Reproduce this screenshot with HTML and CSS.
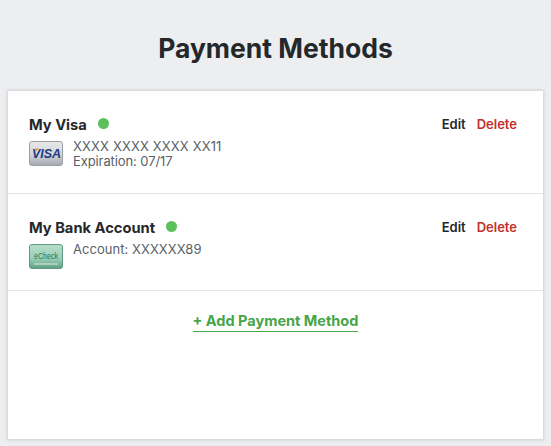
FILE: index.html
```html
<!DOCTYPE html>
<html lang="en">
<head>
<meta charset="utf-8">
<title>Payment Methods</title>
<link rel="stylesheet" href="styles.css">
</head>
<body>
<h1 class="title">Payment Methods</h1>
<main class="card">
  <section class="method method-visa">
    <div class="method-head">
      <div class="name-row"><span class="name">My Visa</span><span class="dot"></span></div>
      <div class="actions"><a class="edit">Edit</a><a class="delete">Delete</a></div>
    </div>
    <div class="method-body">
      <svg class="badge" viewBox="0 0 34 25" width="34" height="25">
        <defs><linearGradient id="gv" x1="0" y1="0" x2="0" y2="1"><stop offset="0" stop-color="#e6e8ea"/><stop offset=".55" stop-color="#d2d5d9"/><stop offset="1" stop-color="#a4a8ae"/></linearGradient></defs>
        <rect x=".5" y=".5" width="33" height="24" rx="2.5" fill="url(#gv)" stroke="#9a9ea3"/>
        <text x="17.500" y="17" text-anchor="middle" class="visa-text">VISA</text>
        <path d="M5 8 L9.500 7 L8 10 Z" fill="#e39a2b"/>
      </svg>
      <div class="details"><div class="num">XXXX XXXX XXXX XX11</div><div class="exp">Expiration: 07/17</div></div>
    </div>
  </section>
  <section class="method method-bank">
    <div class="method-head">
      <div class="name-row"><span class="name">My Bank Account</span><span class="dot"></span></div>
      <div class="actions"><a class="edit">Edit</a><a class="delete">Delete</a></div>
    </div>
    <div class="method-body">
      <svg class="badge" viewBox="0 0 34 25" width="34" height="25">
        <defs><linearGradient id="ge" x1="0" y1="0" x2="0" y2="1"><stop offset="0" stop-color="#b9dfcd"/><stop offset=".6" stop-color="#97cdb4"/><stop offset="1" stop-color="#5f9f84"/></linearGradient></defs>
        <rect x=".5" y=".5" width="33" height="24" rx="2.500" fill="url(#ge)" stroke="#5d9a80"/>
        <text x="17" y="15" text-anchor="middle" textLength="24" lengthAdjust="spacingAndGlyphs" class="echeck-text">eCheck</text>
        <path d="M5 20 H29" stroke="#d6eee2" stroke-width="1"/>
      </svg>
      <div class="details"><div class="acct">Account: XXXXXX89</div></div>
    </div>
  </section>
  <div class="add-row"><a class="add">+ Add Payment Method</a></div>
</main>
</body>
</html>
```
FILE: styles.css
```css
* { box-sizing: border-box; }
html, body { height: 100%; }
body {
  margin: 0;
  padding: 0 8px 7px;
  background: #eceef0;
  font-family: "Inter", "Liberation Sans", sans-serif;
  display: flex;
  flex-direction: column;
  overflow: hidden;
}
.title {
  margin: 0;
  height: 91px;
  padding-top: 29px;
  text-align: center;
  font-size: 26.500px;
  line-height: 38px;
  font-weight: 700;
  color: #25282b;
}
.card {
  flex: 1;
  background: #fff;
  box-shadow: 0 0 3px 1px #cdd0d4;
}
.method { border-bottom: 1px solid #e3e4e6; padding: 24px 26px 0 21px; }
.method-visa { height: 103px; }
.method-bank { height: 97px; }
.method-head { display: flex; justify-content: space-between; align-items: center; height: 20px; }
.name-row { display: flex; align-items: center; }
.name { font-size: 14.700px; font-weight: 700; color: #25282b; }
.dot { width: 11px; height: 11px; border-radius: 50%; background: #5cc05c; margin-left: 11px; margin-bottom: 3px; }
.actions { display: flex; gap: 11px; font-size: 13px; font-weight: 600; margin-bottom: 2px; }
.edit { color: #25282b; }
.delete { color: #c4302a; }
.method-body { display: flex; gap: 10px; margin-top: 2px; }
.badge { flex: none; margin-top: 4px; }
.method-bank .badge { margin-top: 4px; }
.details { font-size: 13px; line-height: 15px; color: #5a5f66; padding-top: 2px; }
.num { letter-spacing: 0.15px; }
.exp { letter-spacing: -0.1px; }
.acct { letter-spacing: 0.05px; }
.visa-text { font: italic 700 12.500px "Liberation Sans", sans-serif; fill: #1d3a80; }
.echeck-text { font: 400 8.500px "Liberation Sans", sans-serif; fill: #2f7558; }
.add-row { display: flex; justify-content: center; padding-top: 20px; }
.add {
  font-size: 14.500px;
  font-weight: 700;
  line-height: 20px;
  color: #46a546;
  border-bottom: 1px solid #46a546;
}
```
